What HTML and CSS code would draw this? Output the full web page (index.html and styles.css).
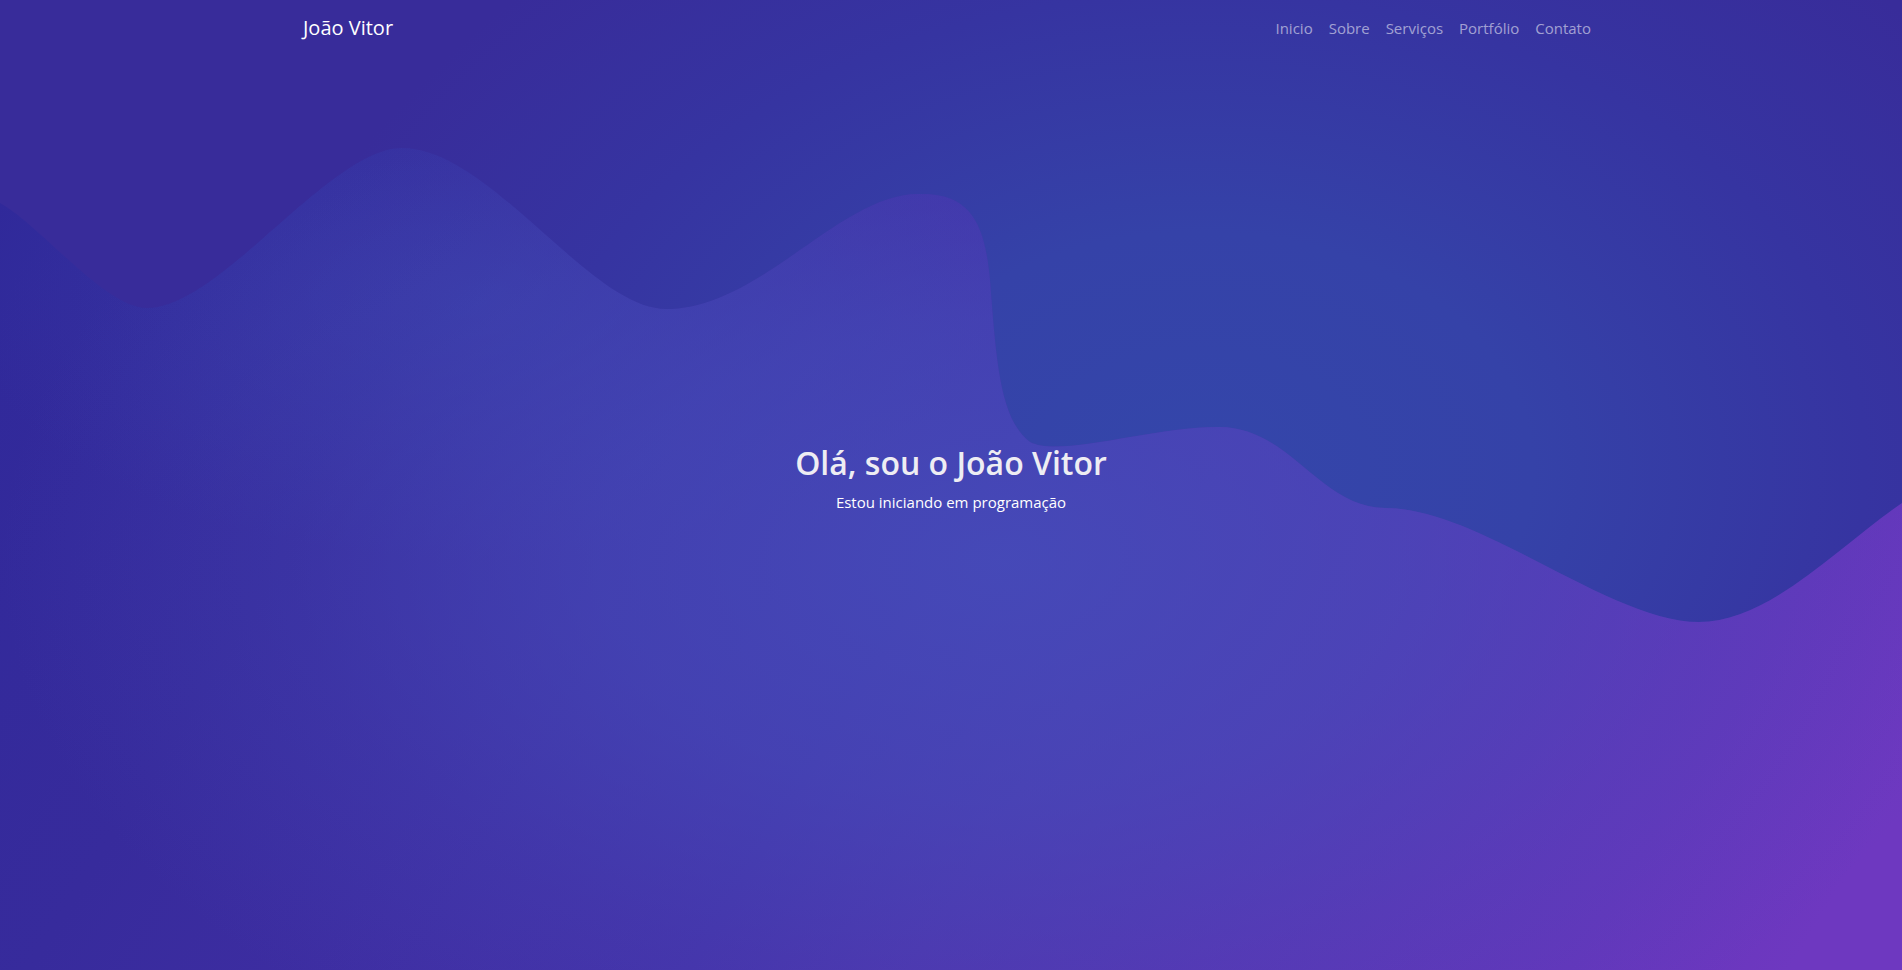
FILE: index.html
```html
<!DOCTYPE html>
<html lang="pt-BR">
<head>
<meta charset="utf-8">
<title>João Vitor</title>
<link rel="stylesheet" href="styles.css">
</head>
<body>
<section class="hero">
  <svg class="waves" viewBox="0 0 1902 970" preserveAspectRatio="none" aria-hidden="true">
    <defs>
      <linearGradient id="waveBase" gradientUnits="userSpaceOnUse" x1="0" y1="300" x2="1600" y2="1280">
        <stop offset="0" stop-color="#30299a"/>
        <stop offset="0.2" stop-color="#372b9c"/>
        <stop offset="0.5" stop-color="#4530a8"/>
        <stop offset="0.6" stop-color="#4f33ad"/>
        <stop offset="0.9" stop-color="#6436bb"/>
        <stop offset="1" stop-color="#6e38c0"/>
      </linearGradient>
      <radialGradient id="waveGlow" gradientUnits="userSpaceOnUse" cx="1000" cy="560" r="1000" gradientTransform="translate(1000 560) scale(1 0.6) translate(-1000 -560)">
        <stop offset="0" stop-color="#454dba" stop-opacity="0.85"/>
        <stop offset="0.4" stop-color="#454dba" stop-opacity="0.6"/>
        <stop offset="0.7" stop-color="#454dba" stop-opacity="0.25"/>
        <stop offset="1" stop-color="#454dba" stop-opacity="0"/>
      </radialGradient>
      <radialGradient id="waveTopGlow" gradientUnits="userSpaceOnUse" cx="480" cy="300" r="520" gradientTransform="translate(480 300) scale(1 0.5) translate(-480 -300)">
        <stop offset="0" stop-color="#3a44ad" stop-opacity="0.55"/>
        <stop offset="1" stop-color="#3a44ad" stop-opacity="0"/>
      </radialGradient>
    </defs>
    <path fill="url(#waveBase)" d="M0,203 C40,225 105,308 147,308 C220,308 330,148 402,148 C490,148 590,309 666,309 C760,309 840,194 918,194 C975,192 985,230 990,280 C996,360 1000,420 1030,442 C1060,458 1150,427 1219,427 C1290,427 1320,508 1385,508 C1480,508 1610,622 1699,622 C1770,622 1840,545 1902,503 L1902,970 L0,970 Z"/>
    <path fill="url(#waveTopGlow)" d="M0,203 C40,225 105,308 147,308 C220,308 330,148 402,148 C490,148 590,309 666,309 C760,309 840,194 918,194 C975,192 985,230 990,280 C996,360 1000,420 1030,442 C1060,458 1150,427 1219,427 C1290,427 1320,508 1385,508 C1480,508 1610,622 1699,622 C1770,622 1840,545 1902,503 L1902,970 L0,970 Z"/>
    <path fill="url(#waveGlow)" d="M0,203 C40,225 105,308 147,308 C220,308 330,148 402,148 C490,148 590,309 666,309 C760,309 840,194 918,194 C975,192 985,230 990,280 C996,360 1000,420 1030,442 C1060,458 1150,427 1219,427 C1290,427 1320,508 1385,508 C1480,508 1610,622 1699,622 C1770,622 1840,545 1902,503 L1902,970 L0,970 Z"/>
  </svg>

  <nav class="navbar">
    <div class="container nav-inner">
      <a class="brand" href="#">João Vitor</a>
      <ul class="nav-links">
        <li><a href="#">Inicio</a></li>
        <li><a href="#">Sobre</a></li>
        <li><a href="#">Serviços</a></li>
        <li><a href="#">Portfólio</a></li>
        <li><a href="#">Contato</a></li>
      </ul>
    </div>
  </nav>

  <main class="hero-content">
    <h2 class="hero-title">Olá, sou o João Vitor</h2>
    <p class="hero-sub">Estou iniciando em programação</p>
  </main>
</section>
</body>
</html>
```
FILE: styles.css
```css
* { box-sizing: border-box; }

html, body {
  margin: 0;
  padding: 0;
}

body {
  font-family: "Open Sans", "Noto Sans", "Liberation Sans", sans-serif;
  font-size: 16px;
  line-height: 1.5;
  color: #fff;
  background: #372c9a;
}

.hero {
  position: relative;
  height: 970px;
  overflow: hidden;
  display: flex;
  flex-direction: column;
  background:
    radial-gradient(ellipse 950px 680px at 1200px 470px,
      #3446aa 0%, #3542a8 35%, #3634a1 70%, #382c9a 100%);
}

.waves {
  position: absolute;
  inset: 0;
  width: 100%;
  height: 100%;
  z-index: 0;
}

.navbar {
  position: relative;
  z-index: 1;
  padding: 8px 0;
}

.container {
  width: 1320px;
  margin: 0 auto;
  padding: 0 12px;
}

.nav-inner {
  display: flex;
  align-items: center;
  justify-content: space-between;
}

.brand {
  font-size: 20px;
  line-height: 30px;
  padding: 5px 0;
  color: #fff;
  text-decoration: none;
}

.nav-links {
  display: flex;
  list-style: none;
  margin: 0;
  padding: 0;
}

.nav-links a {
  display: block;
  padding: 8px 8px;
  font-size: 15px;
  line-height: 24px;
  color: rgba(255, 255, 255, 0.55);
  text-decoration: none;
}

.hero-content {
  position: relative;
  z-index: 1;
  flex: 1;
  display: flex;
  flex-direction: column;
  align-items: center;
  justify-content: center;
  padding-bottom: 68px;
  text-align: center;
}

.hero-title {
  margin: 0 0 8px;
  font-size: 32px;
  font-weight: 600;
  line-height: 1.2;
  color: #eeedf3;
}

.hero-sub {
  margin: 0;
  font-size: 15px;
  line-height: 24px;
  color: #fff;
}
```
